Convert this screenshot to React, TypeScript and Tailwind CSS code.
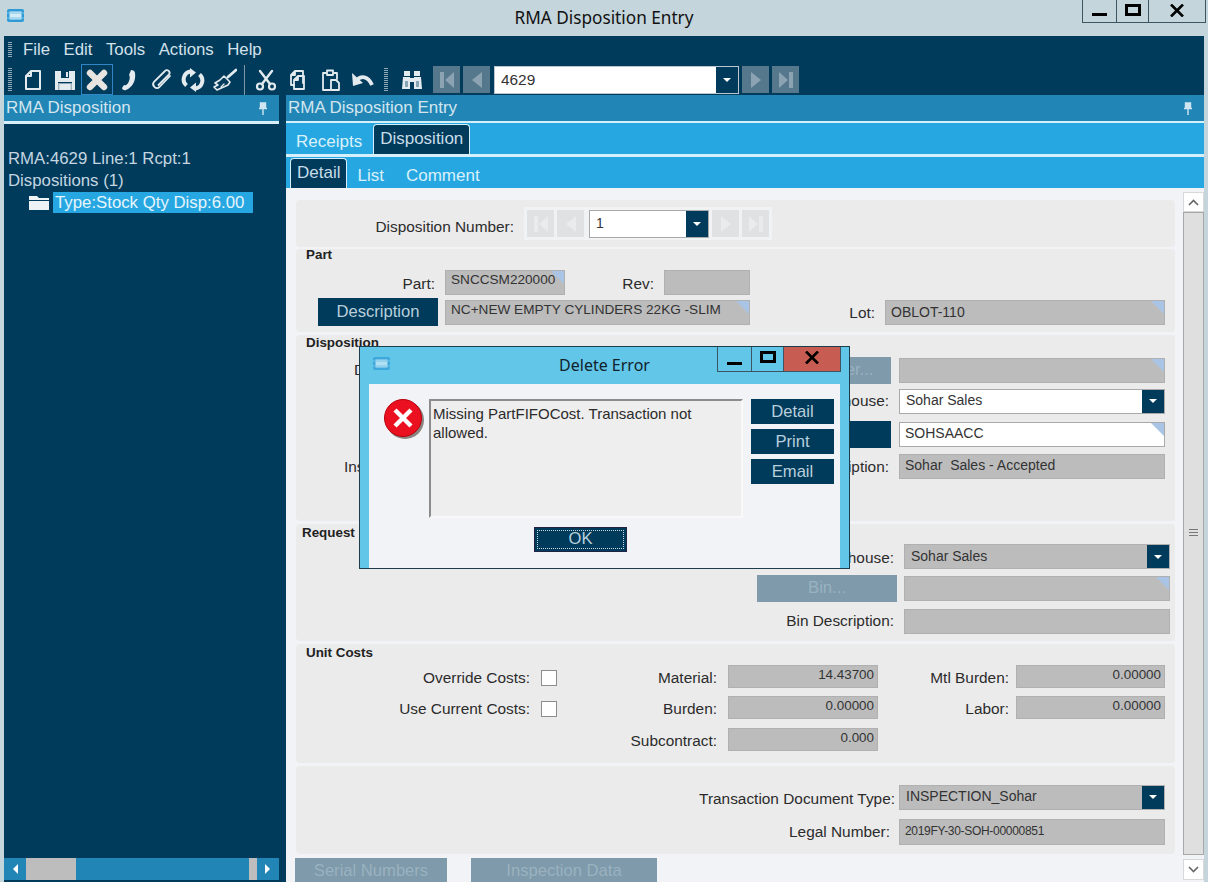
import type { ReactNode } from "react";

const font = "font-['Liberation_Sans',Arial,sans-serif]";

function Lbl({ className = "", children }: { className?: string; children?: ReactNode }) {
  return <span className={`shrink-0 whitespace-nowrap text-right text-[15.4px] leading-[18px] text-[#2b2b2b] ${className}`}>{children}</span>;
}

function Field({ className = "", value, corner, right, white }: { className?: string; value?: string; corner?: boolean; right?: boolean; white?: boolean }) {
  return (
    <div
      className={`relative shrink-0 overflow-hidden whitespace-pre border px-[5px] pb-[4px] leading-[18px] text-[#333] ${white ? "border-[#a9a9a9] bg-white" : "border-[#b0b0b0] bg-[#bcbcbc]"} ${right ? "pr-[3px] text-right" : ""} ${className}`}
    >
      {value}
      {corner && <span className="absolute right-0 top-0 size-0 border-l-[13px] border-t-[13px] border-l-transparent border-t-[#a9c4e4]" />}
    </div>
  );
}

function Combo({ className = "", value, white }: { className?: string; value: string; white?: boolean }) {
  return (
    <div className={`flex shrink-0 items-stretch border ${white ? "border-[#a9a9a9] bg-white" : "border-[#b0b0b0] bg-[#bcbcbc]"} ${className}`}>
      <span className="flex-1 self-center truncate pb-[2px] pl-[6px] text-[14px] leading-[20px] text-[#333]">{value}</span>
      <span className="flex w-[22px] items-center justify-center bg-[#003b5c]">
        <span className="size-0 border-x-[4px] border-t-[4px] border-x-transparent border-t-white" />
      </span>
    </div>
  );
}

function Btn({ className = "", children, disabled }: { className?: string; children?: ReactNode; disabled?: boolean }) {
  return (
    <div className={`flex shrink-0 items-center justify-center text-[16.6px] ${disabled ? "bg-[#7e9aab] text-[#9ab2c0]" : "bg-[#003b5c] text-[#b9cfdb]"} ${className}`}>
      {children}
    </div>
  );
}

function Section({ className = "", title, children }: { className?: string; title?: string; children?: ReactNode }) {
  return (
    <section className={`rounded-[4px] bg-[#ebebeb] ${className}`}>
      {title && <h3 className="pb-[2px] pl-[10px] text-[13.4px] font-bold leading-[12px] text-[#222]">{title}</h3>}
      {children}
    </section>
  );
}

function NavBtn({ dir, light }: { dir: "first" | "prev" | "next" | "last"; light?: boolean }) {
  const left = dir === "first" || dir === "prev";
  const bar = dir === "first" || dir === "last";
  return (
    <div className={`flex size-[27px] shrink-0 items-center justify-center ${light ? "bg-[#dfe1e3]" : "bg-[#56788d]"}`}>
      <svg width="18" height="18" viewBox="0 0 18 18" fill={light ? "#e9ebec" : "#8ba3b2"}>
        {left ? <path d={bar ? "M16 1v16L7 9z" : "M14 1v16L4 9z"} /> : <path d={bar ? "M2 1v16l9-8z" : "M4 1v16l10-8z"} />}
        {bar && <rect x={left ? 2 : 12} y="1" width="4" height="16" />}
      </svg>
    </div>
  );
}

function Grip() {
  return <div className="h-[24px] w-[4px] shrink-0 bg-[repeating-linear-gradient(to_bottom,#8fa9b8_0px,#8fa9b8_1px,transparent_1px,transparent_2px)]" />;
}

function Pin() {
  return (
    <svg width="10" height="13" viewBox="0 0 10 13" fill="none" stroke="#cfe6f2" strokeWidth="1.4">
      <path d="M2.5 1h5v5h-5z" fill="#cfe6f2" />
      <path d="M1 6.5h8M5 7v6" />
    </svg>
  );
}

function AppIcon({ className = "" }: { className?: string }) {
  return (
    <svg className={className} width="19" height="15" viewBox="0 0 19 15">
      <rect x="1" y="1" width="17" height="13" rx="2" fill="#2f9bd6" />
      <rect x="3.5" y="3.5" width="12" height="8" fill="#d4ecf8" />
      <path d="M1 5h17M1 10h17" stroke="#7cc6ea" strokeWidth="1" />
    </svg>
  );
}

function ToolIcon({ children }: { children: ReactNode }) {
  return (
    <div className="flex h-[31px] w-[32px] shrink-0 items-center justify-center">
      <svg width="24" height="24" viewBox="0 0 24 24" fill="none" stroke="#e4ebef" strokeWidth="2" strokeLinecap="round" strokeLinejoin="round">
        {children}
      </svg>
    </div>
  );
}

function Toolbar() {
  return (
    <div className="flex h-[31px] items-center">
      <div className="ml-[4px] mr-[5px]"><Grip /></div>
      <div className="flex items-center">
        <ToolIcon><path d="M10 3h9v18H5V8z M10 3v5H5" /></ToolIcon>
        <ToolIcon>
          <path d="M2 3h20v19H2z" fill="#e4ebef" stroke="none" />
          <path d="M8 3h8v7H8z" fill="#003b5c" stroke="none" />
          <path d="M13 4h2v5h-2z" fill="#e4ebef" stroke="none" />
          <path d="M5 14h14v1.4H5z" fill="#003b5c" stroke="none" />
          <path d="M5 15.4h1.4V22H5zM17.6 15.4H19V22h-1.4z" fill="#9fb2bd" stroke="none" />
        </ToolIcon>
        <div className="flex h-[31px] w-[32px] shrink-0 items-center justify-center border border-[#2f86c6]">
          <svg width="24" height="24" viewBox="0 0 24 24" fill="none" stroke="#e8e4e0" strokeWidth="6.4" strokeLinecap="round">
            <path d="M5 5l14 14M19 5L5 19" />
          </svg>
        </div>
        <ToolIcon>
          <path d="M14 2c2 0 4 1 4 3 1 7-2 14-9 17-2 1-4-1-4-2l2-3c2 1 4-1 5-4 1-2 1-5 0-6z" fill="#e4ebef" stroke="none" />
        </ToolIcon>
        <ToolIcon>
          <path d="M21 8L10.5 19a3.8 3.8 0 0 1-5.5-5.2L16 3a2.6 2.6 0 0 1 3.8 3.6L9.5 17" strokeWidth="1.8" />
        </ToolIcon>
        <ToolIcon>
          <path d="M5.5 17.5a8 8 0 0 1 4-14M18.5 6.5a8 8 0 0 1-4 14" strokeWidth="4" strokeLinecap="butt" />
          <path d="M9 0v9.5l6-5zM15 24v-9.5l-6 5z" fill="#e4ebef" stroke="none" />
        </ToolIcon>
        <ToolIcon>
          <path d="M23 2l-8 7" strokeWidth="2.8" />
          <path d="M11 8l6 6-2 3-11 5-3-3 4-2-3-2 5-3z" strokeWidth="1.6" />
          <path d="M11 16l-3 3" strokeWidth="1.2" />
        </ToolIcon>
        <div className="ml-[3px] mr-[5px] h-[30px] w-px shrink-0 bg-[#7c98a8]" />
        <ToolIcon>
          <circle cx="6" cy="18.5" r="3" strokeWidth="2.2" />
          <circle cx="18" cy="18.5" r="3" strokeWidth="2.2" />
          <path d="M8 16L18 3M16 16L6 3" strokeWidth="2.4" />
        </ToolIcon>
        <ToolIcon>
          <path d="M9 3h8v12M9 3L5 7v10h3M9 3v4H5" strokeWidth="1.8" />
          <path d="M12 8h6v13H8v-9z M12 8v4H8" strokeWidth="1.8" />
        </ToolIcon>
        <ToolIcon>
          <path d="M8 5H5v17h7M16 5h3v6" strokeWidth="1.8" />
          <path d="M9 2.5h6V7H9z" strokeWidth="1.8" />
          <path d="M13 12h5l3 3v7h-8z" strokeWidth="1.8" />
        </ToolIcon>
        <ToolIcon>
          <path d="M6 13c5-6 12-5 16 4" strokeWidth="3.8" strokeLinecap="butt" />
          <path d="M2 5l1 13 10-3z" fill="#e4ebef" stroke="none" />
        </ToolIcon>
      </div>
      <div className="ml-[6px]"><Grip /></div>
      <div className="ml-[10px] flex h-[31px] w-[28px] items-center justify-center">
        <svg width="22" height="20" viewBox="0 0 22 20" fill="#e4ebef">
          <path d="M3 1h6v5H3zM13 1h6v5h-6zM9 8h4v4H9z" />
          <path d="M2 7h7v12H1zM13 7h7l1 12h-8z" />
          <path d="M4 11h3v6H4zM15 11h3v6h-3z" fill="#003b5c" opacity="0.4" />
        </svg>
      </div>
      <div className="ml-[7px] flex items-center gap-[3px]">
        <NavBtn dir="first" />
        <NavBtn dir="prev" />
      </div>
      <div className="ml-[4px] flex h-[28px] w-[245px] items-stretch border border-[#b7c6cf] bg-white">
        <span className="flex-1 pl-[6px] text-[15.4px] leading-[26px] text-[#333]">4629</span>
        <span className="flex w-[22px] items-center justify-center bg-[#003b5c]">
          <span className="size-0 border-x-[4px] border-t-[4px] border-x-transparent border-t-white" />
        </span>
      </div>
      <div className="ml-[3px] flex items-center gap-[3px]">
        <NavBtn dir="next" />
        <NavBtn dir="last" />
      </div>
    </div>
  );
}

function WinButtons({ close, className = "" }: { close?: boolean; className?: string }) {
  return (
    <div className={`flex shrink-0 items-stretch border-b border-l border-[#3b5563] ${className}`}>
      <div className="flex w-[34px] items-end justify-center border-r border-[#3b5563] pb-[6px]">
        <span className="h-[3px] w-[15px] bg-black" />
      </div>
      <div className="flex w-[32px] items-start justify-center border-r border-[#3b5563] pt-[4px]">
        <span className="h-[12px] w-[16px] border-[3px] border-black" />
      </div>
      <div className={`flex w-[57px] items-start justify-center border-r border-[#3b5563] pt-[4px] ${close ? "bg-[#c75d52]" : ""}`}>
        <svg width="14" height="13" viewBox="0 0 14 13" stroke="black" strokeWidth="2.6">
          <path d="M1 0.5l12 12M13 0.5l-12 12" />
        </svg>
      </div>
    </div>
  );
}

function LeftPanel() {
  return (
    <aside className="flex w-[275px] shrink-0 flex-col">
      <div className="flex h-[26px] items-center justify-between bg-[#2185b5] pl-[2px] pr-[11px] text-[17px] text-[#d3e6f0]">
        RMA Disposition
        <Pin />
      </div>
      <div className="h-[3px] bg-[#d6f0fb]" />
      <div className="flex-1 pl-[4px] pt-[24px] text-[16.8px] leading-[22px] text-[#c5d6e0]">
        <div>RMA:4629 Line:1 Rcpt:1</div>
        <div>Dispositions (1)</div>
        <div className="flex items-center pl-[21px]">
          <svg width="20" height="16" viewBox="0 0 20 16" fill="#eef3f6">
            <path d="M0 1h8l2 2h10v2H0zM0 6h20v9H0z" />
          </svg>
          <span className="ml-[4px] h-[21px] w-[200px] whitespace-nowrap bg-[#27a7e1] pl-[2px] leading-[21px] text-[#e6f5fc]">Type:Stock Qty Disp:6.00</span>
        </div>
      </div>
      <div className="mb-[2px] flex h-[22px] items-center bg-[#2185b5]">
        <span className="ml-[9px] size-0 border-y-[5px] border-r-[5px] border-y-transparent border-r-white" />
        <span className="ml-[8px] h-[22px] w-[50px] bg-[#bdbdbd]" />
        <span className="ml-[173px] h-[22px] w-[8px] bg-[#bdbdbd]" />
        <span className="ml-[8px] size-0 border-y-[5px] border-l-[5px] border-y-transparent border-l-white" />
      </div>
    </aside>
  );
}

function Tab({ children, active }: { children: ReactNode; active?: boolean }) {
  return active ? (
    <span className="h-[30px] self-end rounded-t-[4px] border border-b-0 border-[#d6f0fb] bg-[#003b5c] px-[6px] text-[17px] leading-[28px] text-[#c9dde8]">{children}</span>
  ) : (
    <span className="self-end text-[17px] leading-[24px] text-[#d9f1fb]">{children}</span>
  );
}

function ScrollBar() {
  return (
    <div className="flex w-[21px] shrink-0 flex-col pt-[4px]">
      <div className="flex h-[20px] items-center justify-center border border-[#d8d8d8] bg-white">
        <svg width="11" height="7" viewBox="0 0 11 7" fill="none" stroke="#666" strokeWidth="1.6"><path d="M1 6l4.5-4.5L10 6" /></svg>
      </div>
      <div className="flex flex-1 items-center justify-center border border-[#a8a8a8] bg-[#dfdfdf] pb-[2px]">
        <span className="h-[8px] w-[9px] bg-[repeating-linear-gradient(to_bottom,#777_0px,#777_1px,transparent_1px,transparent_3px)]" />
      </div>
      <div className="h-[4px]" />
      <div className="flex h-[21px] items-center justify-center border border-[#d8d8d8] bg-white">
        <svg width="11" height="7" viewBox="0 0 11 7" fill="none" stroke="#666" strokeWidth="1.6"><path d="M1 1l4.5 4.5L10 1" /></svg>
      </div>
      <div className="h-[2px]" />
    </div>
  );
}

function CostRow({ label, costLabel, value, mtl, mtlValue }: { label?: string; costLabel: string; value: string; mtl?: string; mtlValue?: string }) {
  return (
    <div className="flex h-[23px] items-center">
      <Lbl className="w-[234px] pt-[2px]">{label}</Lbl>
      {label ? <span className="ml-[11px] mt-[3px] size-[16px] shrink-0 border border-[#8d8d8d] bg-white" /> : <span className="ml-[11px] size-[16px] shrink-0" />}
      <Lbl className="ml-[9px] w-[151px] pt-[3px]">{costLabel}</Lbl>
      <Field className="ml-[11px] h-[23px] w-[150px] text-[13.4px]" value={value} right />
      {mtl && (
        <>
          <Lbl className="w-[131px] pt-[3px]">{mtl}</Lbl>
          <Field className="ml-[7px] h-[23px] w-[149px] text-[13.4px]" value={mtlValue} right />
        </>
      )}
    </div>
  );
}

function Form() {
  return (
    <div className="min-w-0 flex-1 pl-[10px] pr-[8px] pt-[12px]">
      <Section className="flex h-[47px] items-center">
        <Lbl className="w-[218px] pt-[6px]">Disposition Number:</Lbl>
        <div className="ml-[10px] flex h-[33px] items-center gap-[3px] bg-[#f1f2f3] px-[3px]">
          <NavBtn dir="first" light />
          <NavBtn dir="prev" light />
          <Combo className="ml-[2px] h-[28px] w-[120px]" value="1" white />
          <NavBtn dir="next" light />
          <NavBtn dir="last" light />
        </div>
      </Section>

      <Section className="mt-[2px] h-[83px]" title="Part">
        <div className="mt-[7px] flex h-[25px] items-center">
          <Lbl className="w-[139px] pt-[2px]">Part:</Lbl>
          <Field className="ml-[10px] h-[25px] w-[120px] text-[13.6px]" value="SNCCSM220000" corner />
          <Lbl className="w-[89px] pt-[2px]">Rev:</Lbl>
          <Field className="ml-[10px] h-[25px] w-[86px]" />
        </div>
        <div className="mt-[3px] flex h-[28px] items-center">
          <Btn className="ml-[22px] h-[28px] w-[120px]">Description</Btn>
          <Field className="ml-[7px] h-[25px] w-[305px] text-[13.6px]" value="NC+NEW EMPTY CYLINDERS 22KG -SLIM" corner />
          <Lbl className="w-[125px] pt-[2px]">Lot:</Lbl>
          <Field className="ml-[10px] h-[25px] w-[280px] pt-[2px] text-[14px]" value="OBLOT-110" corner />
        </div>
      </Section>

      <Section className="relative mt-[3px] h-[186px] pt-[2px]" title="Disposition">
        <div className="mt-[6px] flex h-[26px] items-center">
          <Lbl className="w-[275px] pl-[58px] text-left!">Disposition Type:</Lbl>
          <Btn className="ml-[200px] h-[27px] w-[120px]" disabled>Customer...</Btn>
          <Field className="ml-[8px] h-[25px] w-[266px]" corner />
        </div>
        <div className="mt-[6px] flex h-[24px] items-center">
          <Lbl className="w-[593px]">Warehouse:</Lbl>
          <Combo className="ml-[10px] h-[25px] w-[266px]" value="Sohar Sales" white />
        </div>
        <div className="mt-[8px] flex h-[26px] items-center">
          <Btn className="ml-[475px] h-[27px] w-[120px]">Bin...</Btn>
          <Field className="ml-[8px] h-[25px] w-[266px] pt-[1px] text-[14px]" value="SOHSAACC" corner white />
        </div>
        <div className="mt-[7px] flex h-[25px] items-center">
          <Lbl className="w-[100px] pl-[48px] text-left!">Inspector:</Lbl>
          <Lbl className="w-[493px]">Bin Description:</Lbl>
          <Field className="ml-[10px] h-[25px] w-[266px] pt-[1px] text-[14px]" value="Sohar  Sales - Accepted" />
        </div>
      </Section>

      <Section className="mt-[3px] h-[117px] pt-[3px]">
        <h3 className="pb-[2px] pl-[6px] text-[13.4px] font-bold leading-[12px] text-[#222]">Request</h3>
        <div className="mt-[3px] flex h-[25px] items-center">
          <Lbl className="w-[598px] pt-[2px]">Warehouse:</Lbl>
          <Combo className="ml-[10px] h-[25px] w-[266px]" value="Sohar Sales" />
        </div>
        <div className="mt-[6px] flex h-[27px] items-center">
          <Btn className="ml-[461px] h-[27px] w-[140px]" disabled>Bin...</Btn>
          <Field className="ml-[7px] h-[25px] w-[266px]" corner />
        </div>
        <div className="mt-[6px] flex h-[26px] items-center">
          <Lbl className="w-[598px]">Bin Description:</Lbl>
          <Field className="ml-[10px] h-[25px] w-[266px]" />
        </div>
      </Section>

      <Section className="mt-[3px] h-[119px] pt-[3px]" title="Unit Costs">
        <div className="flex flex-col pt-[4px]">
          <CostRow label="Override Costs:" costLabel="Material:" value="14.43700" mtl="Mtl Burden:" mtlValue="0.00000" />
          <div className="h-[8px]" />
          <CostRow label="Use Current Costs:" costLabel="Burden:" value="0.00000" mtl="Labor:" mtlValue="0.00000" />
          <div className="h-[9px]" />
          <CostRow costLabel="Subcontract:" value="0.000" />
        </div>
      </Section>

      <Section className="mt-[3px] h-[88px] pt-[18px]">
        <div className="flex h-[26px] items-center">
          <Lbl className="w-[599px] pt-[3px]">Transaction Document Type:</Lbl>
          <Combo className="ml-[4px] h-[25px] w-[266px]" value="INSPECTION_Sohar" />
        </div>
        <div className="mt-[9px] flex h-[26px] items-center">
          <Lbl className="w-[594px]">Legal Number:</Lbl>
          <Field className="ml-[9px] h-[26px] w-[266px] pt-[2px] text-[12px] tracking-[-0.3px]" value="2019FY-30-SOH-00000851" />
        </div>
      </Section>

      <div className="mt-[4px] flex">
        <Btn disabled className="-ml-[1px] h-[25px] w-[152px] pt-[2px]">Serial Numbers</Btn>
        <Btn disabled className="ml-[24px] h-[25px] w-[186px] pt-[2px]">Inspection Data</Btn>
      </div>
    </div>
  );
}

function ErrorDialog() {
  return (
    <div className="absolute left-[359px] top-[346px] flex h-[223px] w-[491px] flex-col border border-[#1d3c4c] bg-[#62c6e8] px-[9px]">
      <div className="grid h-[37px] shrink-0 grid-cols-[1fr_auto_1fr]">
        <AppIcon className="ml-[3px] mt-[9px] opacity-70" />
        <span className="pt-[6px] font-['Noto_Sans',sans-serif] text-[16px] leading-[24px] text-[#10222c]">Delete Error</span>
        <div className="-mr-[1px] flex items-start justify-end"><WinButtons close className="h-[25px]" /></div>
      </div>
      <div className="flex flex-1 flex-col bg-[#f2f3f6] pb-[8px] pl-[15px] pr-[5px] pt-[15px]">
        <div className="flex">
          <div className="relative size-[39px] shrink-0">
            <span className="absolute left-[2px] top-[2px] size-[38px] rounded-full bg-[#8a8480]" />
            <div className="absolute left-0 top-0 flex size-[38px] items-center justify-center rounded-full border border-[#b8000c] bg-[#ea1020]">
              <svg width="20" height="20" viewBox="0 0 20 20" stroke="white" strokeWidth="4.4"><path d="M2 2l16 16M18 2L2 18" /></svg>
            </div>
          </div>
          <div className="ml-[6px] h-[119px] w-[314px] border-2 border-[#8c8c8c] border-b-[#f8f8f8] border-r-[#f8f8f8] bg-[#eeeeee] px-[2px] pt-[3px] text-[15px] leading-[19px] text-[#2b2b2b]">
            Missing PartFIFOCost. Transaction not allowed.
          </div>
          <div className="ml-[8px] flex flex-col gap-[5px]">
            <Btn className="h-[25px] w-[83px] pt-[1px]">Detail</Btn>
            <Btn className="h-[25px] w-[83px] pt-[1px]">Print</Btn>
            <Btn className="h-[25px] w-[83px] pt-[1px]">Email</Btn>
          </div>
        </div>
        <div className="mt-[9px] flex justify-center pr-[58px]">
          <Btn className="h-[25px] w-[93px] border border-[#224] p-[2px]">
            <span className="flex size-full items-center justify-center border border-dotted border-[#c9d8e0]">OK</span>
          </Btn>
        </div>
      </div>
    </div>
  );
}

export default function App() {
  return (
    <div className={`relative flex h-[882px] w-[1208px] flex-col overflow-hidden bg-[#c5d5dc] ${font}`}>
      <header className="grid h-[36px] shrink-0 grid-cols-[1fr_auto_1fr]">
        <AppIcon className="ml-[6px] mt-[8px]" />
        <span className="pt-[6px] font-['Noto_Sans',sans-serif] text-[17.2px] leading-[24px] text-[#111]">RMA Disposition Entry</span>
        <div className="flex items-start justify-end pr-[2px]"><WinButtons className="h-[23px]" /></div>
      </header>

      <main className="mx-[4px] flex min-h-0 flex-1 flex-col bg-[#003b5c]">
        <nav className="flex h-[28px] shrink-0 items-center">
          <div className="ml-[4px] mr-[11px]"><div className="h-[16px] w-[4px] bg-[repeating-linear-gradient(to_bottom,#8fa9b8_0px,#8fa9b8_1px,transparent_1px,transparent_2px)]" /></div>
          <div className="flex gap-[13.5px] text-[16.8px] text-[#d3e1e9]">
            <span>File</span>
            <span>Edit</span>
            <span>Tools</span>
            <span>Actions</span>
            <span>Help</span>
          </div>
        </nav>
        <Toolbar />
        <div className="flex min-h-0 flex-1">
          <LeftPanel />
          <div className="ml-[7px] flex min-w-0 flex-1 flex-col">
            <div className="flex h-[26px] shrink-0 items-center justify-between bg-[#2185b5] pl-[2px] pr-[11px] text-[17px] text-[#d3e6f0]">
              RMA Disposition Entry
              <Pin />
            </div>
            <div className="h-[2px] shrink-0 bg-[#d6f0fb]" />
            <div className="flex h-[31px] shrink-0 gap-[11px] bg-[#27a7e1] pl-[10px]">
              <Tab>Receipts</Tab>
              <Tab active>Disposition</Tab>
            </div>
            <div className="h-[3px] shrink-0 bg-[#d6f0fb]" />
            <div className="flex h-[31px] shrink-0 bg-[#27a7e1] pl-[4px]">
              <Tab active>Detail</Tab>
              <span className="ml-[10px] flex self-end"><Tab>List</Tab></span>
              <span className="ml-[22px] flex self-end"><Tab>Comment</Tab></span>
            </div>
            <div className="flex min-h-0 flex-1 bg-[#f2f3f6]">
              <Form />
              <ScrollBar />
            </div>
          </div>
        </div>
      </main>

      <ErrorDialog />
    </div>
  );
}
